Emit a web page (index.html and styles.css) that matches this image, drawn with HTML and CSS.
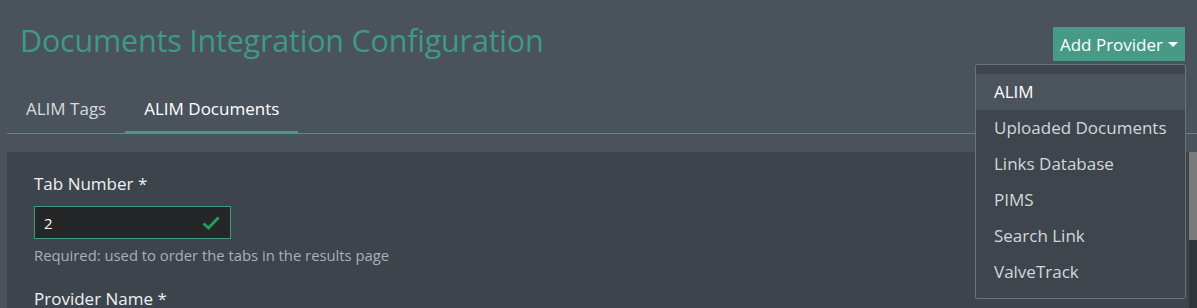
FILE: index.html
```html
<!DOCTYPE html>
<html lang="en">
<head>
<meta charset="utf-8">
<title>Documents Integration Configuration</title>
<link rel="stylesheet" href="styles.css">
</head>
<body>
<div class="page">
  <header class="header">
    <h1 class="title">Documents Integration Configuration</h1>
    <div class="dropdown">
      <button class="add-btn" type="button">Add Provider <span class="caret"></span></button>
      <ul class="menu">
        <li class="menu-item active">ALIM</li>
        <li class="menu-item">Uploaded Documents</li>
        <li class="menu-item">Links Database</li>
        <li class="menu-item">PIMS</li>
        <li class="menu-item">Search Link</li>
        <li class="menu-item">ValveTrack</li>
      </ul>
    </div>
  </header>
  <nav class="tabs">
    <div class="tab">ALIM Tags</div>
    <div class="tab tab-active">ALIM Documents</div>
  </nav>
  <section class="panel">
    <div class="form">
      <label class="label">Tab Number *</label>
      <div class="input">
        <span class="input-value">2</span>
        <svg class="check" width="18" height="14" viewBox="0 0 18 14"><path d="M1.5 7.5 L6.5 12 L16.5 1.5" fill="none" stroke="#1f9d5c" stroke-width="3"/></svg>
      </div>
      <div class="help">Required: used to order the tabs in the results page</div>
      <label class="label label-next">Provider Name *</label>
    </div>
    <div class="scrollbar"><div class="thumb"></div></div>
  </section>
</div>
</body>
</html>
```

FILE: styles.css
```css
html, body {
  margin: 0;
  padding: 0;
  height: 100%;
  overflow: hidden;
}
body {
  background: #4a535c;
  font-family: "Open Sans", "Noto Sans", sans-serif;
  color: #e6e8ea;
}
.page {
  display: flex;
  flex-direction: column;
}
.header {
  display: flex;
  justify-content: space-between;
  align-items: flex-start;
  padding: 0 12px 0 20px;
  height: 88px;
}
.title {
  margin: 0;
  padding-top: 19px;
  font-size: 30.5px;
  font-weight: 400;
  line-height: 42px;
  color: #3f9a82;
  letter-spacing: -0.2px;
}
.dropdown {
  position: relative;
  margin-top: 27px;
}
.add-btn {
  display: flex;
  align-items: center;
  justify-content: center;
  gap: 5px;
  height: 34px;
  width: 132px;
  padding: 0;
  border: 0;
  background: #479a85;
  color: #ffffff;
  font-family: inherit;
  font-size: 17px;
  white-space: nowrap;
}
.caret {
  width: 0;
  height: 0;
  border-left: 5px solid transparent;
  border-right: 5px solid transparent;
  border-top: 5px solid #ffffff;
}
.menu {
  position: absolute;
  right: -1px;
  top: 37px;
  width: 209px;
  margin: 0;
  padding: 9px 0 8px;
  list-style: none;
  background: #3e454d;
  border: 1px solid #6b737a;
  border-radius: 2px;
  z-index: 5;
}
.menu-item {
  height: 36px;
  line-height: 36px;
  padding-left: 18px;
  font-size: 17px;
  color: #d4d7da;
}
.menu-item.active {
  background: #4b545d;
  color: #ffffff;
}
.tabs {
  display: flex;
  margin-left: 7px;
  border-bottom: 1px solid #3f9a82;
  height: 45px;
}
.tab {
  padding: 10px 19px 0;
  font-size: 17px;
  color: #d8dbde;
  line-height: 22px;
}
.tab-active {
  color: #ffffff;
  border-bottom: 3px solid #479a85;
  margin-bottom: -1px;
}
.panel {
  display: flex;
  margin-top: 18px;
  margin-left: 7px;
  background: #3d444c;
  height: 160px;
}
.form {
  flex: 1;
  padding: 19px 27px 0;
  display: flex;
  flex-direction: column;
  align-items: flex-start;
}
.label {
  font-size: 17px;
  line-height: 26px;
  color: #f0f1f2;
}
.input {
  margin-top: 9px;
  background: #252627;
  border: 1px solid #3d9a80;
  display: flex;
  align-items: center;
  justify-content: space-between;
  padding: 0 10px 0 9px;
  box-sizing: border-box;
  width: 197px;
  height: 35px;
}
.input-value {
  font-size: 15px;
  color: #ffffff;
}
.help {
  margin-top: 6px;
  font-size: 14.8px;
  color: #a9b0b6;
  line-height: 21px;
}
.label-next {
  margin-top: 20px;
}
.scrollbar {
  width: 8px;
  background: #2f353b;
}
.thumb {
  height: 88px;
  background: #7b7b7b;
}
```
